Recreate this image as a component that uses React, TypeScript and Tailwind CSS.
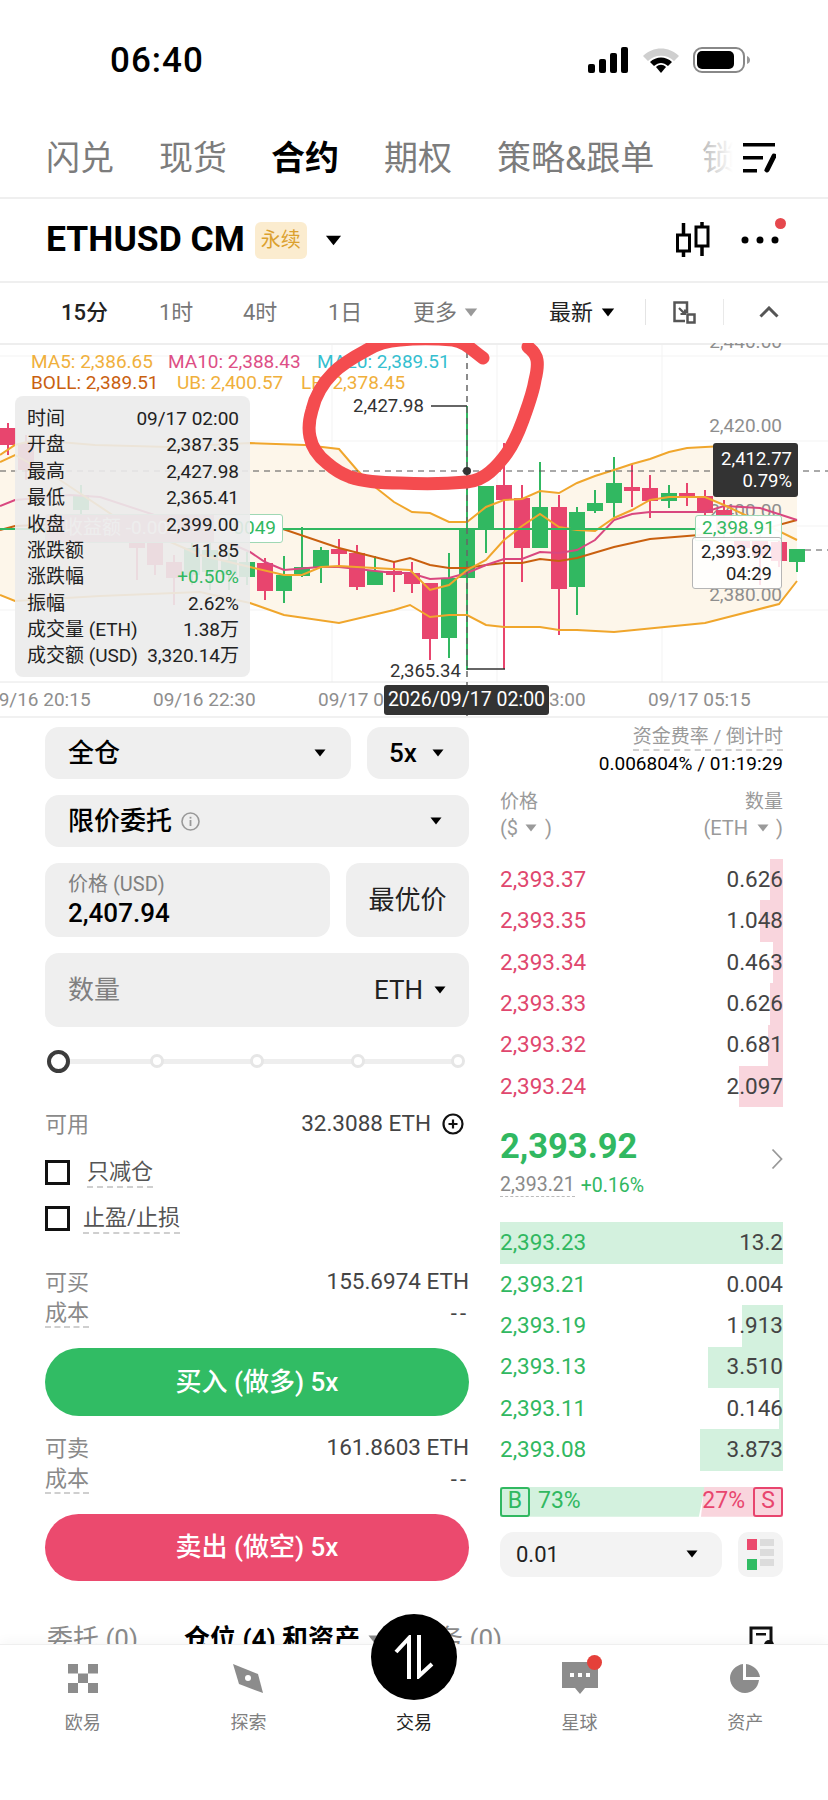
import React from "react";

const G = "#31b861";
const R = "#e8456e";

type C = [number, number, number, number, number, string?];
// x, bodyTop, bodyBottom, wickTop, wickBottom, colour key
const candles: C[] = [
  [8, 428, 445, 423, 455, "r"],
  [26, 443, 470, 435, 480, "r"],
  [81, 495, 510, 485, 520, "g"],
  [137, 540, 548, 530, 580, "r"],
  [155, 543, 565, 530, 575, "r"],
  [174, 562, 578, 555, 605, "r"],
  [192, 548, 575, 540, 585, "g"],
  [210, 550, 572, 540, 590, "g"],
  [229, 560, 575, 548, 590, "g"],
  [247, 562, 577, 552, 585, "g"],
  [265, 563, 591, 558, 600, "r"],
  [284, 575, 591, 556, 603, "g"],
  [302, 567, 576, 527, 577, "g"],
  [321, 550, 567, 547, 583, "g"],
  [339, 549, 554, 539, 567, "r"],
  [357, 553, 587, 545, 590, "r"],
  [375, 571, 585, 556, 585, "g"],
  [394, 571, 575, 562, 592, "r"],
  [412, 573, 584, 562, 593, "r"],
  [430, 583, 639, 583, 660, "r"],
  [449, 578, 638, 553, 658, "g"],
  [467, 528, 578, 406, 670, "g"],
  [486, 486, 529, 486, 553, "g"],
  [504, 485, 500, 443, 669, "r"],
  [522, 498, 548, 485, 582, "r"],
  [540, 507, 548, 462, 548, "g"],
  [559, 507, 589, 495, 635, "r"],
  [577, 512, 587, 507, 615, "g"],
  [595, 503, 511, 490, 513, "g"],
  [614, 483, 503, 457, 517, "g"],
  [632, 487, 491, 464, 507, "r"],
  [650, 488, 501, 475, 518, "r"],
  [669, 493, 501, 485, 508, "g"],
  [687, 493, 498, 483, 506, "r"],
  [705, 496, 513, 490, 515, "r"],
  [724, 510, 530, 500, 540, "r"],
  [742, 528, 548, 518, 556, "r"],
  [760, 540, 556, 535, 585, "r"],
  [779, 542, 561, 540, 567, "r"],
  [797, 549, 562, 549, 572, "g"],
];

const upper: [number, number][] = [[0,455],[15,445],[35,440],[95,445],[170,447],[250,443],[305,445],[339,449],[357,470],[375,487],[394,502],[412,512],[430,513],[449,522],[467,522],[486,507],[504,500],[522,499],[540,491],[559,493],[577,483],[595,476],[614,470],[632,464],[650,459],[669,452],[687,448],[705,447],[724,446],[797,446]];
const lower: [number, number][] = [[0,595],[15,601],[100,596],[200,592],[250,603],[284,615],[339,623],[394,610],[410,605],[430,617],[449,615],[467,615],[486,625],[504,627],[540,627],[559,630],[577,630],[614,632],[705,623],[779,604],[797,581]];
const mid: [number, number][] = [[0,530],[15,526],[150,520],[250,528],[283,529],[339,548],[394,562],[410,558],[430,565],[449,568],[467,568],[486,565],[504,563],[522,563],[540,559],[559,561],[577,558],[614,547],[650,539],[687,536],[760,530],[797,520]];
const ma10: [number, number][] = [[0,506],[15,500],[70,495],[100,497],[200,530],[250,552],[265,562],[284,570],[320,567],[339,567],[394,573],[410,573],[430,579],[449,578],[467,573],[486,565],[504,559],[522,559],[540,552],[559,553],[577,550],[595,540],[614,520],[632,514],[650,512],[705,512],[724,506],[760,508],[797,520]];
const ma5: [number, number][] = [[0,462],[15,455],[60,480],[120,520],[200,555],[250,567],[284,575],[302,575],[321,567],[339,566],[410,570],[430,590],[449,585],[467,570],[486,560],[504,540],[522,526],[540,514],[559,527],[577,530],[595,531],[614,518],[632,510],[650,500],[669,497],[705,497],[724,505],[760,522],[797,540]];

const pts = (a: [number, number][]) => a.map((p) => p.join(",")).join(" ");

const asks = [
  ["2,393.37", "0.626", 13],
  ["2,393.35", "1.048", 23],
  ["2,393.34", "0.463", 10],
  ["2,393.33", "0.626", 13],
  ["2,393.32", "0.681", 15],
  ["2,393.24", "2.097", 44],
] as const;
const bids = [
  ["2,393.23", "13.2", 283],
  ["2,393.21", "0.004", 0],
  ["2,393.19", "1.913", 41],
  ["2,393.13", "3.510", 75],
  ["2,393.11", "0.146", 4],
  ["2,393.08", "3.873", 83],
] as const;
const tips = [
  ["时间", "09/17 02:00"],
  ["开盘", "2,387.35"],
  ["最高", "2,427.98"],
  ["最低", "2,365.41"],
  ["收盘", "2,399.00"],
  ["涨跌额", "11.85"],
  ["涨跌幅", "+0.50%"],
  ["振幅", "2.62%"],
  ["成交量 (ETH)", "1.38万"],
  ["成交额 (USD)", "3,320.14万"],
];

function Caret({ className = "text-black" }: { className?: string }) {
  return (
    <svg width="12" height="8" viewBox="0 0 12 8" className={className}>
      <path d="M0.5 0.5H11.5L6 7.5Z" fill="currentColor" />
    </svg>
  );
}

function Chart() {
  return (
    <div className="relative h-[375px] w-[828px] overflow-hidden border-b-2 border-[#f1f1f1]">
      <svg width="828" height="375" viewBox="0 343 828 375" className="absolute left-0 top-0" fontFamily="Roboto, sans-serif">
        {[332, 497, 662].map((x) => (
          <line key={x} x1={x} x2={x} y1="343" y2="682" stroke="#f3f3f3" strokeWidth="1" />
        ))}
        {[356, 441, 526, 610].map((y) => (
          <line key={y} x1="0" x2="828" y1={y} y2={y} stroke="#f3f3f3" strokeWidth="1" />
        ))}
        <line x1="0" x2="828" y1="344" y2="344" stroke="#eeeeee" strokeWidth="2" />
        <line x1="0" x2="828" y1="682" y2="682" stroke="#e6e6e6" strokeWidth="1" />
        <polygon points={pts([...upper, ...[...lower].reverse()])} fill="#fdf6ea" />
        <g fontSize="19" fill="#8e8e8e" textAnchor="end">
          <text x="782" y="348">2,440.00</text>
          <text x="782" y="432">2,420.00</text>
          <text x="782" y="517">2,400.00</text>
          <text x="782" y="601">2,380.00</text>
        </g>
        {candles.map(([x, t, b, wt, wb, k]) => {
          const col = k === "g" ? G : R;
          return (
            <g key={x}>
              <rect x={x - 1} y={wt} width="2" height={wb - wt} fill={col} />
              <rect x={x - 8} y={t} width="16" height={b - t} fill={col} />
            </g>
          );
        })}
        <polyline points={pts(upper)} fill="none" stroke="#f0a62c" strokeWidth="2" />
        <polyline points={pts(lower)} fill="none" stroke="#f0a62c" strokeWidth="2" />
        <polyline points={pts(mid)} fill="none" stroke="#c9600f" strokeWidth="2" />
        <polyline points={pts(ma10)} fill="none" stroke="#d9477f" strokeWidth="2" />
        <polyline points={pts(ma5)} fill="none" stroke="#f0a62c" strokeWidth="2" />
        <line x1="0" x2="700" y1="529" y2="529" stroke={G} strokeWidth="2" />
        <line x1="0" x2="828" y1="471" y2="471" stroke="#555" strokeWidth="1" strokeDasharray="6 5" />
        <line x1="805" x2="828" y1="550" y2="550" stroke="#555" strokeWidth="1" strokeDasharray="6 5" />
        <line x1="467" x2="467" y1="352" y2="718" stroke="#666" strokeWidth="1.5" strokeDasharray="6 5" />
        <circle cx="467" cy="471" r="4" fill="#333" />
        <line x1="431" x2="467" y1="406" y2="406" stroke="#333" strokeWidth="1.5" />
        <line x1="467" x2="505" y1="669" y2="669" stroke="#333" strokeWidth="1.5" />
        <g fontSize="18.5" fill="#333">
          <text x="353" y="412">2,427.98</text>
          <text x="390" y="677">2,365.34</text>
        </g>
        <g fontSize="19" fill="#8e8e8e">
          <text x="-12" y="706">09/16 20:15</text>
          <text x="153" y="706">09/16 22:30</text>
          <text x="318" y="706">09/17 02:45</text>
          <text x="483" y="706">09/17 03:00</text>
          <text x="648" y="706">09/17 05:15</text>
        </g>
      </svg>

      <div className="absolute left-[31px] top-[8px] flex h-[21px] items-center whitespace-nowrap text-[19px] leading-none">
        <span className="w-[137px] text-[#f0b03c]">MA5: 2,386.65</span>
        <span className="w-[149px] text-[#dd4f86]">MA10: 2,388.43</span>
        <span className="text-[#35bfd0]">MA20: 2,389.51</span>
      </div>
      <div className="absolute left-[31px] top-[29px] flex h-[21px] items-center whitespace-nowrap text-[19px] leading-none">
        <span className="w-[146px] text-[#c9600f]">BOLL: 2,389.51</span>
        <span className="w-[124px] text-[#f0b03c]">UB: 2,400.57</span>
        <span className="text-[#f0b03c]">LB: 2,378.45</span>
      </div>

      {/* position label behind the tooltip */}
      <div className="absolute left-[45px] top-[171px] flex h-[29px] w-[238px] items-center justify-between rounded-[3px] border border-[#9fd8b4] bg-white text-[19px]">
        <span className="flex h-full w-[168px] items-center bg-[#e9a0b3] pl-[18px] text-white">收益额 -0.000</span>
        <span className="pr-[6px] text-[#31b861]">0049</span>
      </div>

      <div className="absolute left-[15px] top-[53px] h-[281px] w-[235px] rounded-[8px] bg-[#ebebeb]/90 pl-[12px] pr-[11px] pt-[10px] text-[19px] text-[#222]">
        {tips.map(([k, v]) => (
          <div key={k} className="flex h-[26.4px] items-center justify-between whitespace-nowrap">
            <span>{k}</span>
            <span className={v.startsWith("+") ? "text-[#31b861]" : ""}>{v}</span>
          </div>
        ))}
      </div>

      <div className="absolute left-[713px] top-[100px] flex h-[54px] w-[85px] flex-col justify-center rounded-[3px] bg-[#333] pr-[6px] text-right text-[18.5px] leading-[22px] text-white">
        <span>2,412.77</span>
        <span>0.79%</span>
      </div>
      <div className="absolute left-[695px] top-[172px] flex h-[26px] w-[87px] items-center justify-center rounded-t-[3px] border border-[#9fd8b4] bg-white/95 text-[19px] text-[#31b861]">
        2,398.91
      </div>
      <div className="absolute left-[692px] top-[194px] flex h-[52px] w-[90px] flex-col justify-center rounded-[3px] border border-[#b5b5b5] bg-white/85 pr-[9px] text-right text-[18.5px] leading-[22px] text-[#222]">
        <span>2,393.92</span>
        <span>04:29</span>
      </div>
      <div className="absolute left-[384px] top-[342px] flex h-[30px] w-[165px] items-center justify-center rounded-[3px] bg-[#333] text-[19.5px] text-white">
        2026/09/17 02:00
      </div>

      <svg width="828" height="375" viewBox="0 343 828 375" className="absolute left-0 top-0">
        <path
          d="M483 358C472 350 465 342 453 340C430 338 410 339 400 340C385 341 375 345 367 350C352 358 342 364 333 373C322 384 315 397 312 410C309 420 308 428 310 437C312 448 318 456 327 463C335 470 342 474 350 477C365 482 385 483 400 483C420 484 445 484 467 482C476 481 483 478 490 472C497 466 502 460 507 453C514 443 519 431 523 420C528 406 533 393 535 380C537 372 538 366 537 360C536 354 532 350 528 347"
          fill="none"
          stroke="#f44c4f"
          strokeWidth="13"
          strokeLinecap="round"
        />
      </svg>
    </div>
  );
}

function OrderRow({ price, qty, w, color, bar }: { price: string; qty: string; w: number; color: string; bar: string }) {
  return (
    <div className="relative flex h-[41.4px] items-center justify-between text-[22.5px]">
      <div className={`absolute bottom-0 right-0 top-0 ${bar}`} style={{ width: w }} />
      <span className={`relative ${color}`}>{price}</span>
      <span className="relative text-[#444]">{qty}</span>
    </div>
  );
}

function Dashed({ children, className = "" }: { children: React.ReactNode; className?: string }) {
  return <span className={`border-b-2 border-dashed border-[#cfcfcf] ${className}`}>{children}</span>;
}

export default function App() {
  return (
    <div className="relative h-[1800px] w-[828px] overflow-hidden bg-white font-['Roboto','Noto_Sans_CJK_SC',sans-serif]">
      {/* status bar */}
      <div className="flex h-[125px] items-start justify-between pl-[110px] pr-[77px] pt-[40px]">
        <span className="text-[35px] font-medium leading-[42px] tracking-[1px] text-black">06:40</span>
        <div className="mt-[7px] flex items-center gap-[13px]">
          <svg width="41" height="26" viewBox="0 0 41 26">
            <rect x="0" y="17" width="7" height="9" rx="2" fill="#000" />
            <rect x="11" y="12" width="7" height="14" rx="2" fill="#000" />
            <rect x="22" y="6" width="7" height="20" rx="2" fill="#000" />
            <rect x="33" y="0" width="7" height="26" rx="2" fill="#000" />
          </svg>
          <svg width="38" height="26" viewBox="0 0 38 26">
            <path d="M1 9C11 -1 27 -1 37 9L32 14C25 7 13 7 6 14Z" fill="#cfcfcf" />
            <path d="M8 15C14 9 24 9 30 15L26 19C21 15 17 15 12 19Z" fill="#000" />
            <path d="M14 20C17 17 21 17 24 20L19 26Z" fill="#000" />
          </svg>
          <svg width="58" height="26" viewBox="0 0 58 26">
            <rect x="1" y="1" width="50" height="24" rx="8" fill="none" stroke="#888" strokeWidth="2" />
            <rect x="4" y="4" width="37" height="18" rx="5" fill="#000" />
            <path d="M54 9C56 10 57 11 57 13C57 15 56 16 54 17Z" fill="#999" />
          </svg>
        </div>
      </div>

      {/* top tabs */}
      <div className="relative flex h-[74px] items-center border-b-2 border-[#efefef] pb-[6px] pl-[46px] text-[34px] text-[#7c7c7c]">
        <span className="w-[113px]">闪兑</span>
        <span className="w-[112px]">现货</span>
        <span className="w-[113px] font-bold text-black">合约</span>
        <span className="w-[113px]">期权</span>
        <span className="w-[205px] whitespace-nowrap">策略&amp;跟单</span>
        <span>锁</span>
        <div className="absolute right-0 top-0 flex h-[70px] w-[125px] items-center justify-end bg-gradient-to-r from-white/50 via-white via-[24%] to-white pb-[4px] pr-[52px]">
          <svg width="33" height="30" viewBox="0 0 33 30">
            <rect x="0" y="0" width="32" height="3.5" fill="#000" />
            <rect x="0" y="13" width="20" height="3.5" fill="#000" />
            <rect x="0" y="26" width="14" height="3.5" fill="#000" />
            <path d="M31 13L24 27" stroke="#000" strokeWidth="5" strokeLinecap="round" />
          </svg>
        </div>
      </div>

      {/* symbol row */}
      <div className="relative flex h-[84px] items-center border-b-2 border-[#efefef] pl-[46px] pr-[49px]">
        <span className="text-[35.5px] font-bold leading-none text-black">ETHUSD CM</span>
        <span className="ml-[10px] flex h-[37px] w-[52px] items-center justify-center rounded-[6px] bg-[#fbeccf] text-[20px] text-[#dba12f]">永续</span>
        <Caret className="ml-[18px] h-[11px] w-[17px] text-black" />
        <svg width="34" height="36" viewBox="0 0 34 36" className="ml-auto">
          <path d="M7.5 1V13M7.5 29V35M26 0V5M26 24V34" stroke="#000" strokeWidth="3.5" />
          <rect x="1.5" y="13" width="12" height="16" fill="none" stroke="#000" strokeWidth="3" />
          <rect x="20" y="5" width="12" height="19" fill="none" stroke="#000" strokeWidth="3" />
        </svg>
        <svg width="38" height="8" viewBox="0 0 38 8" className="ml-[31px]">
          <circle cx="4" cy="4" r="3.5" fill="#000" />
          <circle cx="19" cy="4" r="3.5" fill="#000" />
          <circle cx="34" cy="4" r="3.5" fill="#000" />
        </svg>
        <span className="absolute left-[775px] top-[19px] h-[11px] w-[11px] rounded-full bg-[#e5484d]" />
      </div>

      {/* timeframe row */}
      <div className="flex h-[60px] items-center pb-[2px] text-[22px] text-[#777]">
        <span className="ml-[61px] w-[98px] font-medium text-[#222]">15分</span>
        <span className="w-[84px]">1时</span>
        <span className="w-[85px]">4时</span>
        <span className="w-[85px]">1日</span>
        <span className="flex w-[136px] items-center gap-[7px]">
          更多
          <Caret className="h-[9px] w-[14px] text-[#999]" />
        </span>
        <span className="flex w-[96px] items-center gap-[8px] text-[#222]">
          最新
          <Caret className="h-[9px] w-[14px] text-black" />
        </span>
        <span className="h-[26px] w-px bg-[#e4e4e4]" />
        <svg width="23" height="23" viewBox="0 0 23 23" className="ml-[27px]">
          <path d="M14 12V1.5H1.5V20H12" fill="none" stroke="#555" strokeWidth="2.5" />
          <path d="M6 7L12 13M12 8.5V13H7.5" fill="none" stroke="#555" strokeWidth="2.2" />
          <rect x="14.5" y="13.5" width="7" height="8" fill="none" stroke="#555" strokeWidth="2.5" />
        </svg>
        <span className="ml-[27px] h-[26px] w-px bg-[#e9e9e9]" />
        <svg width="20" height="12" viewBox="0 0 20 12" className="ml-[35px]">
          <path d="M1.5 10.5L10 2L18.5 10.5" fill="none" stroke="#555" strokeWidth="3" />
        </svg>
      </div>

      <Chart />

      {/* trading area */}
      <div className="flex items-start">
        {/* left */}
        <div className="ml-[45px] w-[424px] pt-[9px]">
          <div className="flex gap-[16px]">
            <div className="flex h-[52px] w-[306px] items-center justify-between rounded-[14px] bg-[#efefef] pl-[23px] pr-[25px] text-[26px] font-medium text-black">
              全仓
              <Caret />
            </div>
            <div className="flex h-[52px] w-[102px] items-center justify-between rounded-[14px] bg-[#efefef] pl-[22px] pr-[25px] text-[26px] font-medium text-black">
              5x
              <Caret />
            </div>
          </div>
          <div className="mt-[16px] flex h-[52px] items-center rounded-[14px] bg-[#efefef] pl-[23px] pr-[27px] text-[26px] font-medium text-black">
            限价委托
            <svg width="19" height="19" viewBox="0 0 19 19" className="ml-[9px]">
              <circle cx="9.5" cy="9.5" r="8.5" fill="none" stroke="#999" strokeWidth="1.6" />
              <rect x="8.6" y="8" width="1.8" height="6" fill="#999" />
              <rect x="8.6" y="4.8" width="1.8" height="1.8" fill="#999" />
            </svg>
            <Caret className="ml-auto text-black" />
          </div>
          <div className="mt-[16px] flex gap-[16px]">
            <div className="flex h-[74px] w-[285px] flex-col justify-center rounded-[14px] bg-[#efefef] pl-[23px]">
              <span className="text-[20px] leading-[26px] text-[#808080]">价格 (USD)</span>
              <span className="text-[26px] font-medium leading-[32px] text-black">2,407.94</span>
            </div>
            <div className="flex h-[74px] w-[123px] items-center justify-center rounded-[14px] bg-[#efefef] text-[26px] text-[#222]">最优价</div>
          </div>
          <div className="mt-[16px] flex h-[74px] items-center justify-between rounded-[14px] bg-[#efefef] pl-[23px] pr-[23px]">
            <span className="text-[26px] text-[#808080]">数量</span>
            <span className="flex items-center gap-[11px] text-[26px] text-[#222]">
              ETH
              <Caret />
            </span>
          </div>
          {/* slider */}
          <div className="relative mt-[23px] h-[22px]">
            <div className="absolute left-[12px] right-[10px] top-[9px] h-[5px] bg-[#eeeeee]" />
            <span className="absolute left-[2px] top-0 h-[23px] w-[23px] rounded-full border-[4px] border-[#3c3c3c] bg-white" />
            <span className="absolute left-[105px] top-[4px] h-[14px] w-[14px] rounded-full border-[3px] border-[#e6e6e6] bg-white" />
            <span className="absolute left-[205px] top-[4px] h-[14px] w-[14px] rounded-full border-[3px] border-[#e6e6e6] bg-white" />
            <span className="absolute left-[306px] top-[4px] h-[14px] w-[14px] rounded-full border-[3px] border-[#e6e6e6] bg-white" />
            <span className="absolute left-[406px] top-[4px] h-[14px] w-[14px] rounded-full border-[3px] border-[#e6e6e6] bg-white" />
          </div>
          <div className="mt-[37px] flex h-[30px] items-center justify-between pr-[5px] text-[22px]">
            <span className="text-[#8a8a8a]">可用</span>
            <span className="flex items-center gap-[11px] text-[22.5px] text-[#444]">
              32.3088 ETH
              <svg width="22" height="22" viewBox="0 0 22 22">
                <circle cx="11" cy="11" r="9.5" fill="none" stroke="#111" strokeWidth="2.2" />
                <path d="M11 6.5V15.5M6.5 11H15.5" stroke="#111" strokeWidth="2.2" />
              </svg>
            </span>
          </div>
          <div className="mt-[21px] flex h-[25px] items-center text-[22px] text-[#555]">
            <span className="h-[25px] w-[25px] border-[3px] border-[#111]" />
            <Dashed className="ml-[17px] leading-[28px]">只减仓</Dashed>
          </div>
          <div className="mt-[21px] flex h-[25px] items-center text-[22px] text-[#555]">
            <span className="h-[25px] w-[25px] border-[3px] border-[#111]" />
            <Dashed className="ml-[13px] leading-[28px]">止盈/止损</Dashed>
          </div>

          <div className="mt-[36px] flex h-[30px] items-center justify-between text-[22px]">
            <span className="text-[#8a8a8a]">可买</span>
            <span className="text-[22.5px] text-[#444]">155.6974 ETH</span>
          </div>
          <div className="flex h-[32px] items-center justify-between text-[22px]">
            <Dashed className="leading-[27px] text-[#8a8a8a]">成本</Dashed>
            <span className="tracking-[3px] text-[#444]">--</span>
          </div>
          <div className="mt-[19px] flex h-[68px] items-center justify-center rounded-full bg-[#31bc64] text-[26px] font-medium text-white">买入 (做多) 5x</div>

          <div className="mt-[17px] flex h-[30px] items-center justify-between text-[22px]">
            <span className="text-[#8a8a8a]">可卖</span>
            <span className="text-[22.5px] text-[#444]">161.8603 ETH</span>
          </div>
          <div className="flex h-[32px] items-center justify-between text-[22px]">
            <Dashed className="leading-[27px] text-[#8a8a8a]">成本</Dashed>
            <span className="tracking-[3px] text-[#444]">--</span>
          </div>
          <div className="mt-[19px] flex h-[67px] items-center justify-center rounded-full bg-[#eb4a6e] text-[26px] font-medium text-white">卖出 (做空) 5x</div>
        </div>

        {/* right */}
        <div className="ml-[31px] w-[283px] pt-[7px]">
          <div className="flex h-[26px] justify-end text-[19px] leading-[24px] text-[#9a9a9a]">
            <Dashed>资金费率 / 倒计时</Dashed>
          </div>
          <div className="flex h-[26px] items-center justify-end text-[19px] text-black">0.006804% / 01:19:29</div>
          <div className="mt-[12px] flex h-[26px] items-center justify-between text-[19px] text-[#9a9a9a]">
            <span>价格</span>
            <span>数量</span>
          </div>
          <div className="flex h-[26px] items-center justify-between text-[20px] text-[#9a9a9a]">
            <span className="flex items-center">
              ($
              <Caret className="ml-[7px] mr-[8px] h-[8px] w-[12px] text-[#9a9a9a]" />)
            </span>
            <span className="flex items-center">
              (ETH
              <Caret className="ml-[9px] mr-[7px] h-[8px] w-[12px] text-[#9a9a9a]" />)
            </span>
          </div>
          <div className="mt-[18px]">
            {asks.map(([p, q, w]) => (
              <OrderRow key={p} price={p} qty={q} w={w} color="text-[#e0476e]" bar="bg-[#f9d5dd]" />
            ))}
          </div>
          <div className="mt-[20px] flex items-center justify-between">
            <div>
              <div className="flex h-[40px] items-center text-[34.5px] font-bold text-[#31b861]">2,393.92</div>
              <div className="mt-[5px] flex h-[26px] items-center gap-[6px] text-[19.5px]">
                <span className="border-b border-dashed border-[#bbb] leading-[23px] text-[#8a8a8a]">2,393.21</span>
                <span className="text-[#31b861]">+0.16%</span>
              </div>
            </div>
            <svg width="12" height="22" viewBox="0 0 12 22" className="mb-[8px]">
              <path d="M1.5 1.5L10.5 11L1.5 20.5" fill="none" stroke="#999" strokeWidth="1.8" />
            </svg>
          </div>
          <div className="mt-[24px]">
            {bids.map(([p, q, w]) => (
              <OrderRow key={p} price={p} qty={q} w={w} color="text-[#31b861]" bar="bg-[#d3f1de]" />
            ))}
          </div>
          <div className="relative mt-[16px] flex h-[30px] items-center justify-between overflow-hidden text-[23px]">
            <div className="absolute inset-y-0 left-0 w-[205px] bg-[#d3f1de] [clip-path:polygon(0_0,100%_0,97%_100%,0_100%)]" />
            <div className="absolute inset-y-0 right-0 w-[82px] bg-[#f9d5dd] [clip-path:polygon(4%_0,100%_0,100%_100%,0_100%)]" />
            <div className="relative flex items-center text-[#31b861]">
              <span className="flex h-[30px] w-[30px] items-center justify-center rounded-[3px] border-2 border-[#31b861]">B</span>
              <span className="ml-[8px]">73%</span>
            </div>
            <div className="relative flex items-center text-[#e8456e]">
              <span className="mr-[8px]">27%</span>
              <span className="flex h-[30px] w-[30px] items-center justify-center rounded-[3px] border-2 border-[#e8456e]">S</span>
            </div>
          </div>
          <div className="mt-[15px] flex gap-[16px]">
            <div className="flex h-[45px] w-[222px] items-center justify-between rounded-[14px] bg-[#f3f3f3] pl-[16px] pr-[24px] text-[22px] text-[#222]">
              0.01
              <Caret />
            </div>
            <div className="grid h-[45px] w-[45px] grid-cols-[10px_14px] content-center justify-center gap-x-[3px] gap-y-[3px] rounded-[10px] bg-[#f3f3f3]">
              <div className="row-span-2 h-[11px] bg-[#eb4a6e]" />
              <div className="h-[7px] bg-[#dcdcdc]" />
              <div className="h-[7px] bg-[#dcdcdc]" />
              <div className="col-start-1 row-start-3 h-[11px] bg-[#31bc64]" />
              <div className="col-start-2 row-start-3 h-[7px] bg-[#dcdcdc]" />
            </div>
          </div>
        </div>
      </div>

      {/* peek tabs behind the nav */}
      <div className="mt-[38px] flex h-[40px] items-center whitespace-nowrap pl-[47px] text-[26px] text-[#8a8a8a]">
        <span className="w-[137px]">委托 (0)</span>
        <span className="font-bold text-black">仓位 (4) 和资产</span>
        <Caret className="ml-[8px]" />
        <span className="ml-[31px]">任务 (0)</span>
        <svg width="26" height="30" viewBox="0 0 26 30" className="absolute left-[749px] top-[1626px]">
          <path d="M22 2H2V28H22Z" fill="none" stroke="#111" strokeWidth="3" />
          <rect x="7" y="7" width="10" height="2.5" fill="#111" />
          <circle cx="20" cy="19" r="5" fill="#111" />
        </svg>
      </div>

      {/* bottom nav */}
      <div className="absolute inset-x-0 bottom-0 top-[1644px] flex border-t border-[#efefef] bg-white pt-[18px] shadow-[0_-4px_10px_rgba(0,0,0,0.03)]">
        {[
          [
            "欧易",
            <svg key="a" width="30" height="29" viewBox="0 0 30 29" fill="#8c8c8c">
              <rect x="0" y="0" width="10" height="9.5" />
              <rect x="20" y="0" width="10" height="9.5" />
              <rect x="10" y="9.5" width="10" height="9.5" />
              <rect x="0" y="19" width="10" height="10" />
              <rect x="20" y="19" width="10" height="10" />
            </svg>,
          ],
          [
            "探索",
            <svg key="b" width="30" height="29" viewBox="0 0 30 29">
              <polygon points="0,0 25,10 30,29 6,20" fill="#8c8c8c" />
              <circle cx="15" cy="14" r="3" fill="#fff" />
            </svg>,
          ],
          ["交易", <div key="c" className="h-[29px] w-[30px]" />],
          [
            "星球",
            <svg key="d" width="36" height="32" viewBox="0 0 36 32">
              <path d="M0 0H36V26H23L18 32L13 26H0Z" fill="#8c8c8c" />
              <rect x="8" y="11" width="4" height="4" fill="#fff" />
              <rect x="16" y="11" width="4" height="4" fill="#fff" />
              <rect x="24" y="11" width="4" height="4" fill="#fff" />
            </svg>,
          ],
          [
            "资产",
            <svg key="e" width="30" height="29" viewBox="0 0 30 29">
              <path d="M13 0V16H29C28 24 22 29 15 29C7 29 0 22 0 14C0 7 6 1 13 0Z" fill="#8c8c8c" />
              <path d="M16 0C23 1 29 6 30 13H16Z" fill="#8c8c8c" />
            </svg>,
          ],
        ].map(([label, icon], i) => (
          <div key={i} className="relative flex w-[165.6px] flex-col items-center">
            <div className="flex h-[30px] items-center">{icon}</div>
            <span className={`mt-[18px] text-[18px] leading-[24px] ${i === 2 ? "text-[#222]" : "text-[#808080]"}`}>{label as string}</span>
          </div>
        ))}
      </div>
      <span className="absolute left-[587px] top-[1655px] h-[15px] w-[15px] rounded-full bg-[#e5403a]" />

      {/* centre trade button */}
      <div className="absolute left-[371px] top-[1614px] flex h-[86px] w-[86px] items-center justify-center rounded-full bg-black">
        <svg width="40" height="44" viewBox="0 0 40 44">
          <path d="M15 44V3L2 17" fill="none" stroke="#fff" strokeWidth="4" />
          <path d="M25 0V41L38 29" fill="none" stroke="#fff" strokeWidth="4" />
        </svg>
      </div>
    </div>
  );
}
